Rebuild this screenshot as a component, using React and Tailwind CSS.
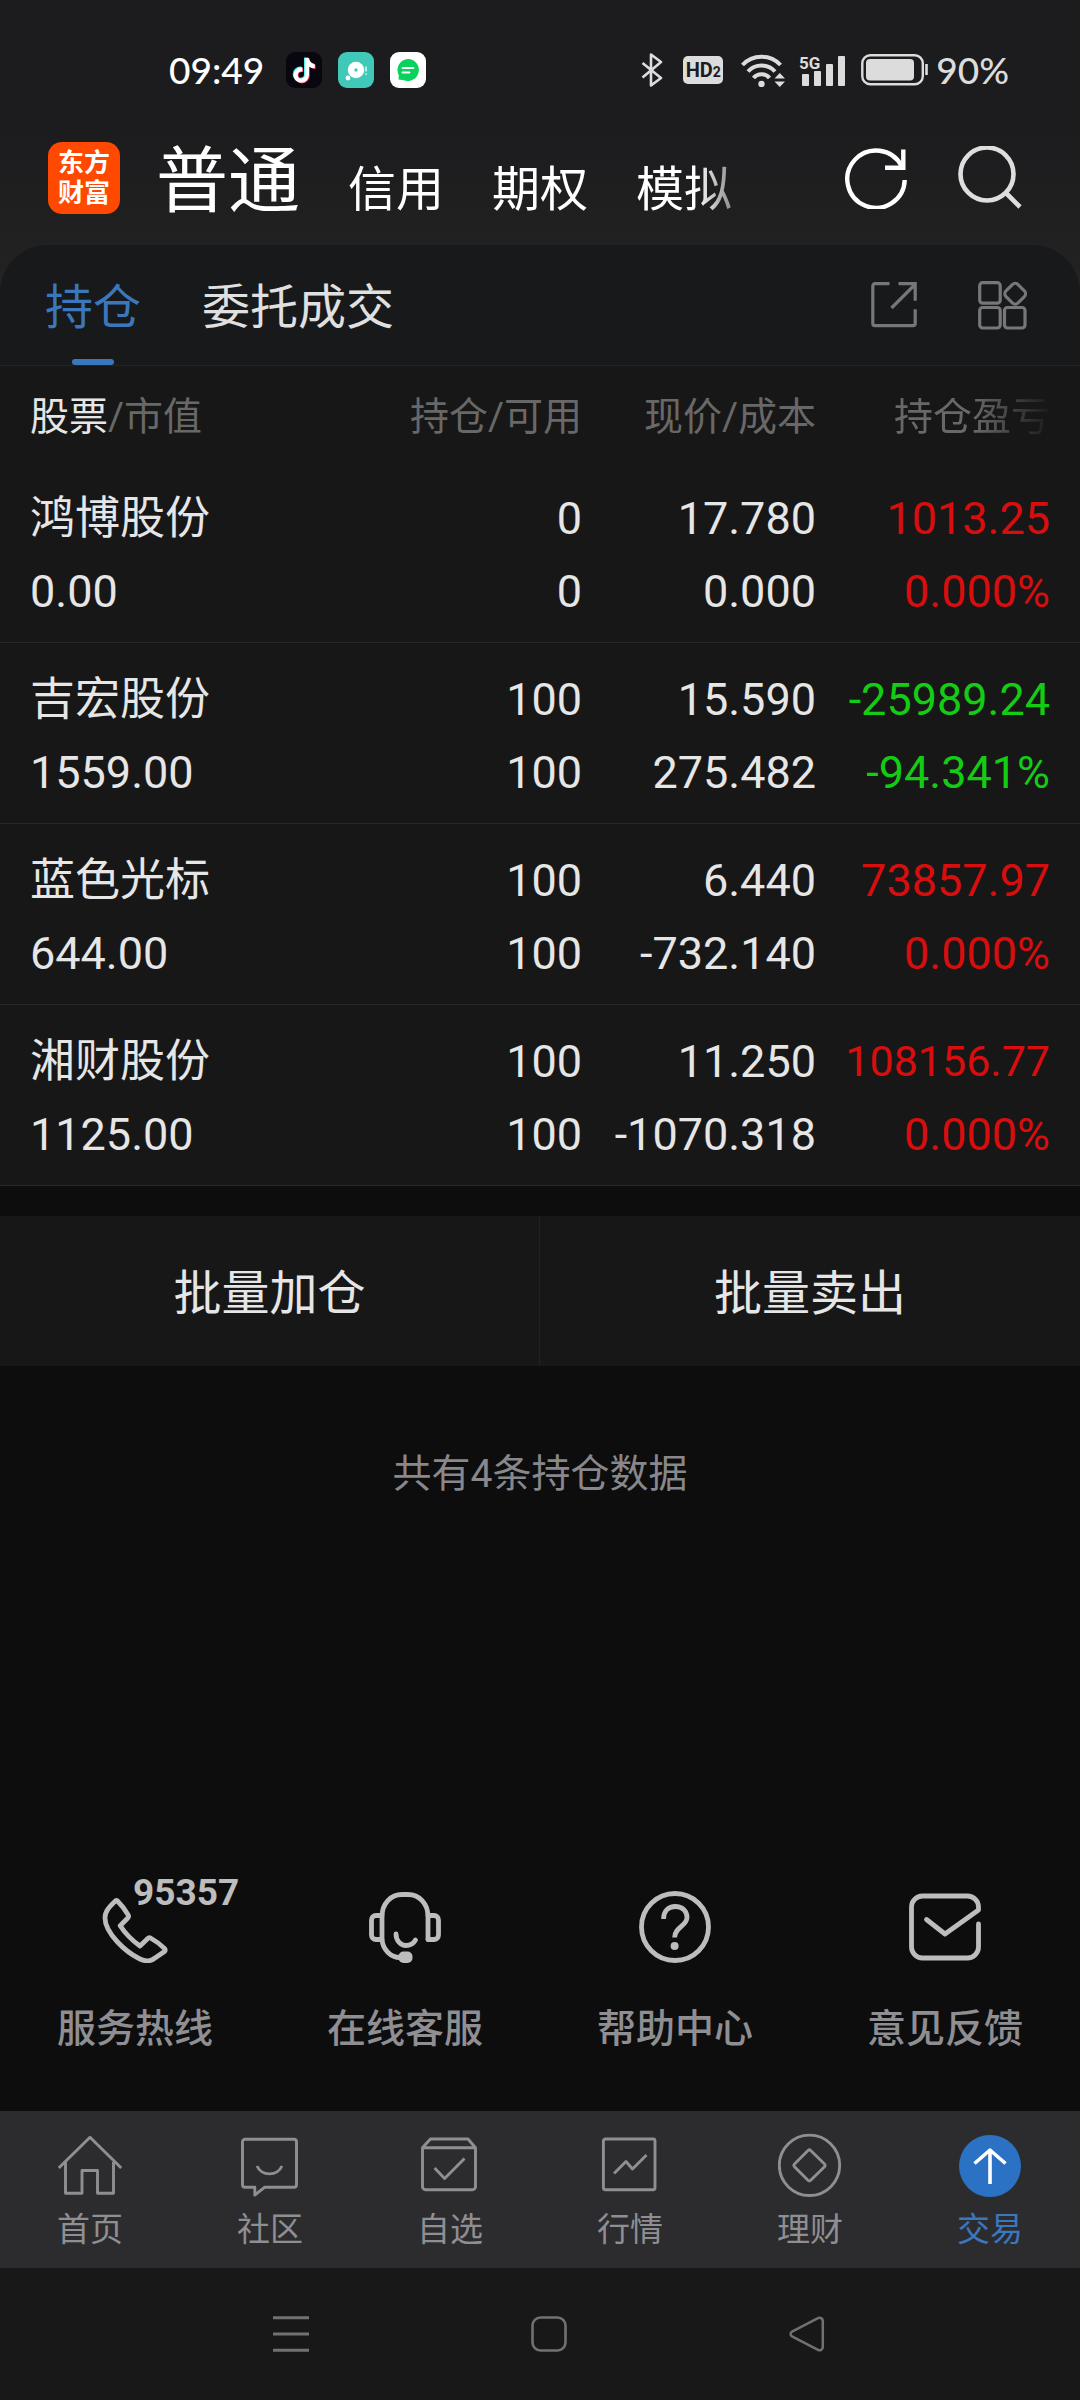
import { useState } from 'react';

const holdings = [
  { name: '鸿博股份', value: '0.00', qty: '0', available: '0', price: '17.780', cost: '0.000', profit: '1013.25', rate: '0.000%' },
  { name: '吉宏股份', value: '1559.00', qty: '100', available: '100', price: '15.590', cost: '275.482', profit: '-25989.24', rate: '-94.341%' },
  { name: '蓝色光标', value: '644.00', qty: '100', available: '100', price: '6.440', cost: '-732.140', profit: '73857.97', rate: '0.000%' },
  { name: '湘财股份', value: '1125.00', qty: '100', available: '100', price: '11.250', cost: '-1070.318', profit: '108156.77', rate: '0.000%' },
];

const NOTE = 'M16.6 5.82A4.28 4.28 0 0 1 15.54 3h-3.09v12.4a2.59 2.59 0 1 1-2.59-2.5c.27 0 .53.04.77.11V9.86a5.7 5.7 0 0 0-.77-.05A5.73 5.73 0 1 0 15.54 15.5V9.2a7.3 7.3 0 0 0 4.3 1.38V7.5s-1.88.09-3.24-1.68z';

function StatusBar() {
  return (
    <div className="flex items-center justify-between pt-[46px] pb-0.5 pl-[169px] pr-[71px] h-24">
      <div className="flex items-center gap-4">
        <span className="font-['Lato'] text-[37px] leading-[46px] font-medium text-white mr-1.5">09:49</span>
        <svg className="size-9" viewBox="0 0 36 36">
          <rect width="36" height="36" rx="9" fill="#08070f" />
          <g transform="translate(2 2) scale(1.35)">
            <path d={NOTE} fill="#25f4ee" transform="translate(-.6 -.5)" />
            <path d={NOTE} fill="#fe2c55" transform="translate(.6 .5)" />
            <path d={NOTE} fill="#fff" />
          </g>
        </svg>
        <svg className="size-9" viewBox="0 0 36 36">
          <rect width="36" height="36" rx="9" fill="#40c9b8" />
          <circle cx="18" cy="18" r="8.2" fill="#fff" />
          <circle cx="18" cy="18" r="1.7" fill="#40c9b8" />
          <circle cx="10" cy="26" r="2.4" fill="#fff" />
          <path d="M28 14.5v5M28 21.5v1.5" stroke="#d5f5ef" strokeWidth="1.6" />
        </svg>
        <svg className="size-9" viewBox="0 0 36 36">
          <rect width="36" height="36" rx="9" fill="#fff" />
          <path d="M18 7a11 11 0 1 1-4 21.3L8.500 27.500l.3-4.300A11 11 0 0 1 18 7z" fill="#08d15c" />
          <path d="M12.500 16h11M12.500 20.500h7" stroke="#fff" strokeWidth="1.800" strokeLinecap="round" />
        </svg>
      </div>

      <div className="flex items-center text-[#dcdcdc]">
        <svg className="w-[22px] h-[34px] mr-5" viewBox="0 0 22 34" fill="none" stroke="currentColor" strokeWidth="2.6">
          <path d="M1.500 10L20 25l-10 7.500V1.500L20 9 1.500 24.500" strokeLinejoin="round" />
        </svg>
        <span className="w-10 h-7 mr-[18px] rounded-[5px] bg-[#dcdcdc] flex items-baseline justify-center font-['Roboto'] font-bold text-[20px] leading-7 text-[#1c1c1e]">
          HD<span className="text-[14px]">2</span>
        </span>
        <svg className="w-11 h-[34px] mr-[14px]" viewBox="0 0 44 34" fill="none" stroke="currentColor" strokeWidth="4">
          <path d="M1.500 12c10-11 28-11 38 0M7 18.500c7-8 20-8 27 0M12.500 25c4-5 12-5 16 0" />
          <circle cx="20.500" cy="31" r="3.200" fill="currentColor" stroke="none" />
          <path d="M33.500 25.500h10.500l-5.200-5.500zM33.500 28.500h10.500l-5.200 5.500z" fill="currentColor" stroke="none" />
        </svg>
        <svg className="w-[46px] h-9 mr-4" viewBox="0 -2 46 36" fill="currentColor">
          <text x="0" y="15" fontFamily="Roboto" fontWeight="700" fontSize="17">5G</text>
          <rect x="3" y="20" width="7" height="12" rx="1" />
          <rect x="15" y="17" width="7" height="15" rx="1" />
          <rect x="27" y="10" width="7" height="22" rx="1" />
          <rect x="39" y="2" width="7" height="30" rx="1" />
        </svg>
        <svg className="w-[67px] h-8 mr-2" viewBox="0 0 67 32">
          <rect x="1.300" y="1.300" width="60.500" height="29" rx="8" fill="none" stroke="currentColor" strokeWidth="2.400" />
          <rect x="5" y="5" width="48" height="21.500" rx="4" fill="currentColor" />
          <path d="M65.500 10v11" stroke="currentColor" strokeWidth="2.600" />
        </svg>
        <span className="font-['Lato'] text-[37px] leading-[46px] font-medium">90%</span>
      </div>
    </div>
  );
}

function Header() {
  return (
    <header className="flex items-center h-24 mt-[34px] mb-[19px] pl-12 pr-[58px]">
      <a href="#home" className="size-[72px] shrink-0 rounded-[14px] bg-[#ff4800] text-white font-bold text-[26px] leading-[30px] flex flex-col items-center justify-center">
        <span>东方</span>
        <span>财富</span>
      </a>
      <nav className="flex-1 flex items-baseline gap-12 ml-9 pt-2 text-white text-[48px] leading-none whitespace-nowrap [mask-image:linear-gradient(to_right,black_calc(100%-125px),transparent_calc(100%-55px))]">
        <a href="#normal" className="text-[72px]">普通</a>
        <a href="#credit">信用</a>
        <a href="#option">期权</a>
        <a href="#demo">模拟</a>
      </nav>
      <button aria-label="刷新" className="ml-6">
        <svg className="size-[62px]" viewBox="0 0 62 62" fill="none" stroke="#fff" strokeWidth="4.400">
          <path d="M59.700 33A28.700 28.700 0 1 1 56.500 19" />
          <path d="M58.300 2.500V20.700H40" />
        </svg>
      </button>
      <button aria-label="搜索" className="ml-[51px]">
        <svg className="size-16" viewBox="0 0 64 64" fill="none" stroke="#dedede" strokeWidth="4.600">
          <circle cx="29" cy="28" r="26.500" />
          <path d="M47.500 46.500L62 61" />
        </svg>
      </button>
    </header>
  );
}

function SubTabs() {
  const [tab, setTab] = useState('持仓');

  return (
    <div className="flex h-[121px] pl-[45px] pr-[53px] border-b border-[#242426] bg-[#18191b] rounded-t-[48px]">
      {['持仓', '委托成交'].map((label) => (
        <button
          key={label}
          onClick={() => setTab(label)}
          className={`relative mr-[61px] pt-1.5 text-[48px] leading-none ${tab === label ? 'text-[#3a77bd]' : 'text-[#e0e0e0]'}`}
        >
          {label}
          {tab === label && <span className="absolute bottom-0 left-1/2 -translate-x-1/2 w-[42px] h-1.5 rounded-full bg-[#3a77bd]" />}
        </button>
      ))}
      <div className="ml-auto flex items-center gap-[61px] text-[#77777a]">
        <button aria-label="分享">
          <svg className="size-[46px]" viewBox="0 0 46 46" fill="none" stroke="currentColor" strokeWidth="3.200">
            <path d="M18.500 1.700H4a2.200 2.200 0 0 0-2.200 2.200V41.500a2.200 2.200 0 0 0 2.200 2.200H42a2.200 2.200 0 0 0 2.200-2.200V27.300" />
            <path d="M27.500 1.700H44.200V18.700M20.500 26L44 2.500" />
          </svg>
        </button>
        <button aria-label="更多功能">
          <svg className="size-[49px]" viewBox="0 0 49 49" fill="none" stroke="currentColor" strokeWidth="3.200">
            <rect x="1.700" y="1.700" width="20.500" height="20.500" rx="3" />
            <rect x="1.700" y="26.500" width="20.500" height="20.500" rx="3" />
            <rect x="26.500" y="26.500" width="20.500" height="20.500" rx="3" />
            <rect x="28.700" y="4.200" width="17" height="17" rx="4" transform="rotate(45 37.200 12.700)" />
          </svg>
        </button>
      </div>
    </div>
  );
}

function HoldingsTable() {
  return (
    <table className="w-full table-fixed border-separate border-spacing-0 bg-[#171717] text-right text-[#e6e6e6]">
      <thead>
        <tr className="h-24 text-[39px] leading-none text-[#686868] *:p-0 *:pt-1.5 *:font-normal">
          <th className="text-left"><div className="pl-[30px]"><span className="text-[#e6e6e6]">股票</span>/市值</div></th>
          <th className="w-[234px]">持仓/可用</th>
          <th className="w-[234px]">现价/成本</th>
          <th className="w-[264px]">
            <div className="pr-[30px] [mask-image:linear-gradient(to_right,black_calc(100%-105px),transparent_calc(100%-25px))]">持仓盈亏</div>
          </th>
        </tr>
      </thead>
      <tbody>
        {holdings.map((h) => (
          <tr
            key={h.name}
            className="text-[45px] leading-[73px] *:p-0 *:pt-5 *:pb-[14px] *:border-b *:border-[#28282a]"
          >
            <td className="text-left">
              <div className="pl-[30px]">{h.name}</div>
              <div className="pl-[30px]">{h.value}</div>
            </td>
            <td>
              <div>{h.qty}</div>
              <div>{h.available}</div>
            </td>
            <td>
              <div>{h.price}</div>
              <div>{h.cost}</div>
            </td>
            <td className={h.profit.startsWith('-') ? 'text-[#14cc14]' : 'text-[#d80e0e]'}>
              {/* long amounts drop a size so they stay inside the column */}
              <div className={`pr-[30px] ${h.profit.length > 8 && !h.profit.startsWith('-') ? 'text-[43px]' : ''}`}>{h.profit}</div>
              <div className="pr-[30px]">{h.rate}</div>
            </td>
          </tr>
        ))}
      </tbody>
    </table>
  );
}

const services = [
  {
    label: '服务热线',
    badge: '95357',
    icon: (
      <path d="M16.700 9.700C11 15 6 20 6 27c0 8 6 17 12.500 24C25 58 33 64 40 67.500c8 4 12 2.500 16 -.5l9.500-6.500c1-1 1-2 0-3C61 53 56 49.500 51.500 47c-1-.5-2-.3-2.700.5L41 55C34 50 26 42 21.200 34.700l7.800-8c.7-.8.8-1.500.3-2.500C26.500 19 22.500 14 18.500 10c-.7-.7-1.200-.8-1.800-.3z" />
    ),
  },
  {
    label: '在线客服',
    icon: (
      <>
        <path d="M59 48.500V25.500C59 12.500 50 3.500 39 3.500H33C22 3.500 13 12.500 13 25.500V48.500C14 59 22 66.500 31 66.500" />
        <path d="M13 24.500H7A4.500 4.500 0 0 0 2.500 29V44A4.500 4.500 0 0 0 7 48.500H13M59 24.500H65A4.500 4.500 0 0 1 69.500 29V44A4.500 4.500 0 0 1 65 48.500H59" />
        <path d="M27 43C27 50 32 54.500 37 54.500C41 54.500 44.500 52.500 46.500 49" />
        <rect x="29.500" y="60.500" width="14" height="11.500" rx="5" fill="currentColor" stroke="none" />
      </>
    ),
  },
  {
    label: '帮助中心',
    icon: (
      <>
        <circle cx="36" cy="36" r="33.500" />
        <path d="M24.600 28C24.600 20 29.500 15.500 36.300 15.500S48 20 48 26.500C48 35 35.600 36 35.600 46.500" strokeLinecap="butt" />
        <circle cx="35.600" cy="55" r="4" fill="currentColor" stroke="none" />
      </>
    ),
  },
  {
    label: '意见反馈',
    icon: (
      <path d="M69.500 33V56a11 11 0 0 1-11 11H13.500a11 11 0 0 1-11-11V16a11 11 0 0 1 11-11H58.500a11 11 0 0 1 11 11V19L36 43L17.500 28.500" />
    ),
  },
];

function ServiceLinks() {
  return (
    <div className="mt-auto grid grid-cols-4 pb-[58px]">
      {services.map((s) => (
        <a key={s.label} href={`#${s.label}`} className="flex flex-col items-center gap-[42px]">
          <span className="relative text-[#bdbdbd]">
            <svg className="size-[72px]" viewBox="0 0 72 72" fill="none" stroke="currentColor" strokeWidth="4.800" strokeLinecap="round" strokeLinejoin="round">
              {s.icon}
            </svg>
            {s.badge && <span className="absolute left-[34px] -top-4 font-['Roboto'] font-bold text-[37px] leading-[36px]">{s.badge}</span>}
          </span>
          <span className="text-[39px] leading-[48px] font-medium text-[#8e8e93]">{s.label}</span>
        </a>
      ))}
    </div>
  );
}

const tabs = [
  { label: '首页', icon: <path d="M.8 35L32 4.200L63.200 35M7.500 29V60.200H24V37.500H39.500V60.200H55.500V29" /> },
  {
    label: '社区',
    icon: <path d="M7 6.300H56a2.500 2.500 0 0 1 2.500 2.500V51.800a2.500 2.500 0 0 1-2.500 2.500H26.500L16.800 62V54.300H7a2.500 2.500 0 0 1-2.500-2.500V8.800A2.500 2.500 0 0 1 7 6.300zM19 33C24 43.500 39 43.500 44 33" />,
  },
  {
    label: '自选',
    icon: <path d="M4.500 14.700L12.400 6H50L57.500 14.700V53.700a3 3 0 0 1-3 3H7.500a3 3 0 0 1-3-3zH57.500M16.600 35L26.600 45.500L46.500 25.500" />,
  },
  {
    label: '行情',
    icon: <path d="M7.400 6H55a2 2 0 0 1 2 2V54.700a2 2 0 0 1-2 2H7.400a2 2 0 0 1-2-2V8a2 2 0 0 1 2-2zM16 40.500L28 28.500L34.500 36L48.500 22" />,
  },
  {
    label: '理财',
    icon: (
      <>
        <circle cx="31.500" cy="32.300" r="30.200" />
        <path d="M30 17.500L16.500 31a2 2 0 0 0 0 2.700L30 47.300a2 2 0 0 0 2.700 0L46.500 33.700a2 2 0 0 0 0-2.700L32.700 17.500a2 2 0 0 0-2.700 0z" />
      </>
    ),
  },
  {
    label: '交易',
    active: true,
    icon: (
      <>
        <circle cx="32" cy="33" r="31" fill="#2b72c4" stroke="none" />
        <path d="M32 51V17M16.500 30.500L32 17L47.500 30.500" stroke="#fff" strokeWidth="3.600" />
      </>
    ),
  },
];

function TabBar() {
  return (
    <nav className="grid grid-cols-6 bg-[#2c2c2e] pt-[22px] pb-[17px]">
      {tabs.map((t) => (
        <a key={t.label} href={`#${t.label}`} className={`flex flex-col items-center gap-3 ${t.active ? 'text-[#3a77bd]' : 'text-[#8e8e93]'}`}>
          <svg className="size-16" viewBox="0 0 64 64" fill="none" stroke="currentColor" strokeWidth="2.900" strokeLinejoin="round">
            {t.icon}
          </svg>
          <span className="text-[33px] leading-[42px]">{t.label}</span>
        </a>
      ))}
    </nav>
  );
}

function SystemNav() {
  return (
    <div className="grid grid-cols-3 place-items-center h-[132px] pl-[15%] pr-[13.333%] bg-[#181818] text-[#717171]">
      <button aria-label="最近任务">
        <svg className="size-9" viewBox="0 0 36 36" stroke="currentColor" strokeWidth="3">
          <path d="M0 1.700H36M0 18H36M0 34.300H36" />
        </svg>
      </button>
      <button aria-label="主屏幕">
        <svg className="size-9" viewBox="0 0 36 36" fill="none" stroke="currentColor" strokeWidth="2.600">
          <rect x="1.500" y="1.500" width="33" height="33" rx="8" />
        </svg>
      </button>
      <button aria-label="返回">
        <svg className="size-9" viewBox="0 0 36 36" fill="none" stroke="currentColor" strokeWidth="2.500">
          <path d="M29 2.200L3 15.700a2.600 2.600 0 0 0 0 4.600L29 33.800a3.200 3.200 0 0 0 4.800-2.700V4.900A3.200 3.200 0 0 0 29 2.200z" />
        </svg>
      </button>
    </div>
  );
}

export default function App() {
  return (
    <div className="min-h-screen flex flex-col bg-[#0d0d0d] font-['Roboto','Noto_Sans_CJK_SC',sans-serif]">
      <div className="bg-linear-to-b from-[#1c1c1e] from-35% to-[#262626]">
        <StatusBar />
        <Header />
        <SubTabs />
      </div>
      <HoldingsTable />

      <div className="mt-[30px] grid grid-cols-2 bg-[#171717] text-[48px] leading-none text-[#e6e6e6]">
        <button className="h-[150px] pt-1.5 border-r border-[#222224]">批量加仓</button>
        <button className="h-[150px] pt-1.5">批量卖出</button>
      </div>
      <p className="mt-[82px] mb-20 text-center text-[39px] leading-[52px] text-[#88888c]">共有4条持仓数据</p>

      <ServiceLinks />
      <TabBar />
      <SystemNav />
    </div>
  );
}
